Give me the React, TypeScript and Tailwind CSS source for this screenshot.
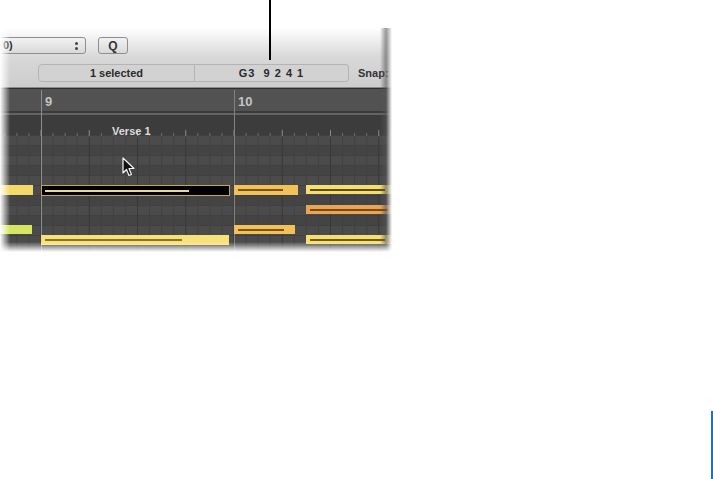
const BAR9 = 41;
const BAR = 193;
const STEP = BAR / 16;

type Note = { x: number; y: number; w: number; h: number; color: string; line: number; lineColor: string };

const notes: Note[] = [
  { x: 0, y: 185, w: 33, h: 10, color: "#f3d86a", line: 0, lineColor: "" },
  { x: 234, y: 185, w: 64, h: 10, color: "#f2c25a", line: 45, lineColor: "#7a5418" },
  { x: 306, y: 185, w: 90, h: 9, color: "#f6de72", line: 75, lineColor: "#5e4e18" },
  { x: 306, y: 205, w: 90, h: 9, color: "#e9a556", line: 78, lineColor: "#7a4a14" },
  { x: 0, y: 225, w: 32, h: 9, color: "#d6e663", line: 0, lineColor: "" },
  { x: 234, y: 225, w: 61, h: 9, color: "#f2c25a", line: 46, lineColor: "#7a5418" },
  { x: 41, y: 235, w: 188, h: 10, color: "#f8e07a", line: 137, lineColor: "#8a7428" },
  { x: 306, y: 235, w: 90, h: 9, color: "#f6de72", line: 75, lineColor: "#6e5c20" },
];

const darkRows = [1, 3, 6, 8];

function Grid() {
  const top = 88;
  const lines = [];
  for (let i = -4; i < 30; i++) {
    const x = BAR9 + i * STEP;
    if (x < 0 || x > 400) continue;
    const beat = i % 4 === 0;
    lines.push(
      <line key={"g" + i} x1={x} x2={x} y1={137 - top} y2={252 - top}
        stroke={beat ? "#383838" : "#424242"} strokeWidth={1} />
    );
    lines.push(
      <line key={"t" + i} x1={x} x2={x} y1={(beat ? 130 : 133) - top} y2={136 - top}
        stroke={beat ? "#8a8a8a" : "#6e6e6e"} strokeWidth={1} />
    );
  }
  const rows = [];
  for (let r = 0; r < 12; r++) {
    rows.push(
      <rect key={"r" + r} x={0} y={135 + r * 10 - top} width={400} height={10}
        fill={darkRows.includes(r) ? "#444" : "#4b4b4b"} />
    );
    rows.push(
      <line key={"rl" + r} x1={0} x2={400} y1={135 + r * 10 - top + 0.5} y2={135 + r * 10 - top + 0.5} stroke="#404040" />
    );
  }
  return (
    <svg className="absolute inset-0" width={400} height={170}>
      <rect x={0} y={0} width={400} height={24} fill="#525252" />
      <rect x={0} y={0} width={400} height={1} fill="#2e2e2e" />
      <rect x={0} y={23} width={400} height={2} fill="#3a3a3a" />
      <rect x={0} y={25} width={400} height={2} fill="#646464" />
      <rect x={0} y={27} width={400} height={22} fill="#3c3c3c" />
      {rows}
      {lines}
      <line x1={BAR9 + 0.5} x2={BAR9 + 0.5} y1={2} y2={170} stroke="#8e8e8e" />
      <line x1={BAR9 + BAR + 0.5} x2={BAR9 + BAR + 0.5} y1={2} y2={170} stroke="#828282" />
    </svg>
  );
}

function Cursor() {
  return (
    <svg className="absolute left-[122px] top-[69px]" width={16} height={22} viewBox="0 0 16 22">
      <path d="M1 1 L1 16 L4.5 12.5 L7 18.5 L9.5 17.5 L7 11.5 L12 11.5 Z" fill="#111" stroke="#f4f4f4" strokeWidth={1.2} strokeLinejoin="round" />
    </svg>
  );
}

function Toolbar() {
  return (
    <div className="h-[60px] bg-gradient-to-b from-white via-[#d8d8d8] to-[#cdcdcd] bg-[#cdcdcd] border-b border-[#8a8a8a] pt-[9px]">
      <div className="flex items-center h-[17px]">
        <div className="w-[90px] h-[17px] -ml-[4px] pl-[6px] pr-[7px] rounded-[3px] border border-[#8e8e8e] bg-gradient-to-b from-[#f2f2f2] to-[#d9d9d9] flex items-center justify-between text-[11px] font-bold text-[#333]">
          <span>0)</span>
          <span className="flex flex-col gap-[2px]">
            <span className="w-[3px] h-[3px] rounded-full bg-[#444]" />
            <span className="w-[3px] h-[3px] rounded-full bg-[#444]" />
          </span>
        </div>
        <div className="ml-[12px] w-[30px] h-[17px] rounded-[3px] border border-[#8e8e8e] bg-gradient-to-b from-[#f2f2f2] to-[#d9d9d9] flex items-center justify-center text-[12px] font-bold text-[#333]">
          Q
        </div>
      </div>
      <div className="flex items-center h-[18px] mt-[10px] text-[11px] font-bold text-[#2a2a2a]">
        <div className="ml-[38px] w-[157px] h-[18px] rounded-l-[4px] border border-[#b4b4b4] bg-[#d2d2d2] flex items-center justify-center">
          1 selected
        </div>
        <div className="w-[154px] h-[18px] rounded-r-[4px] border border-l-0 border-[#b4b4b4] bg-[#d2d2d2] flex items-center justify-center tracking-[1px]">
          G3&nbsp;&nbsp;9 2 4 1
        </div>
        <div className="ml-[9px] text-[#333]">Snap:</div>
      </div>
    </div>
  );
}

export default function App() {
  return (
    <div className="w-[713px] h-[479px] bg-white relative overflow-hidden font-['Liberation_Sans',Arial,sans-serif]">
      <div className="pt-[28px] w-[392px] relative">
        <Toolbar />
        <div className="relative h-[164px] overflow-hidden bg-[#3b3b3b]">
          <Grid />
          <span className="absolute left-[45px] top-[4px] text-[13px] font-bold text-[#c4c4c4]">9</span>
          <span className="absolute left-[238px] top-[4px] text-[13px] font-bold text-[#c4c4c4]">10</span>
          <span className="absolute left-[112px] top-[35px] text-[11px] font-bold text-[#dcdcdc]">Verse 1</span>
          {notes.map((n, i) => (
            <div
              key={i}
              className="absolute flex items-center pl-[4px]"
              style={{ left: n.x, top: n.y - 88, width: n.w, height: n.h, background: n.color }}
            >
              {n.line > 0 && <div className="h-[2px]" style={{ width: n.line, background: n.lineColor }} />}
            </div>
          ))}
          <div className="absolute left-[41px] top-[97px] w-[189px] h-[11px] bg-black border border-[#c9a35c] flex items-center pl-[3px]">
            <div className="h-[2px] w-[144px] bg-[#e8d4a8]" />
          </div>
          <Cursor />
        </div>
        <div className="absolute left-0 top-0 bottom-0 w-[10px] bg-gradient-to-r from-white to-transparent" />
        <div className="absolute right-0 top-[28px] bottom-0 w-[12px] bg-gradient-to-r from-[#1a1a1a]/0 via-[#555]/60 to-white" />
        <div className="absolute left-0 right-0 bottom-0 h-[10px] bg-gradient-to-b from-transparent to-white" />
      </div>
      <div className="absolute left-[269px] top-0 w-[2px] h-[60px] bg-black" />
      <div className="absolute left-[711px] top-[411px] w-[2px] h-[68px] bg-[#2a6db0]" />
    </div>
  );
}
